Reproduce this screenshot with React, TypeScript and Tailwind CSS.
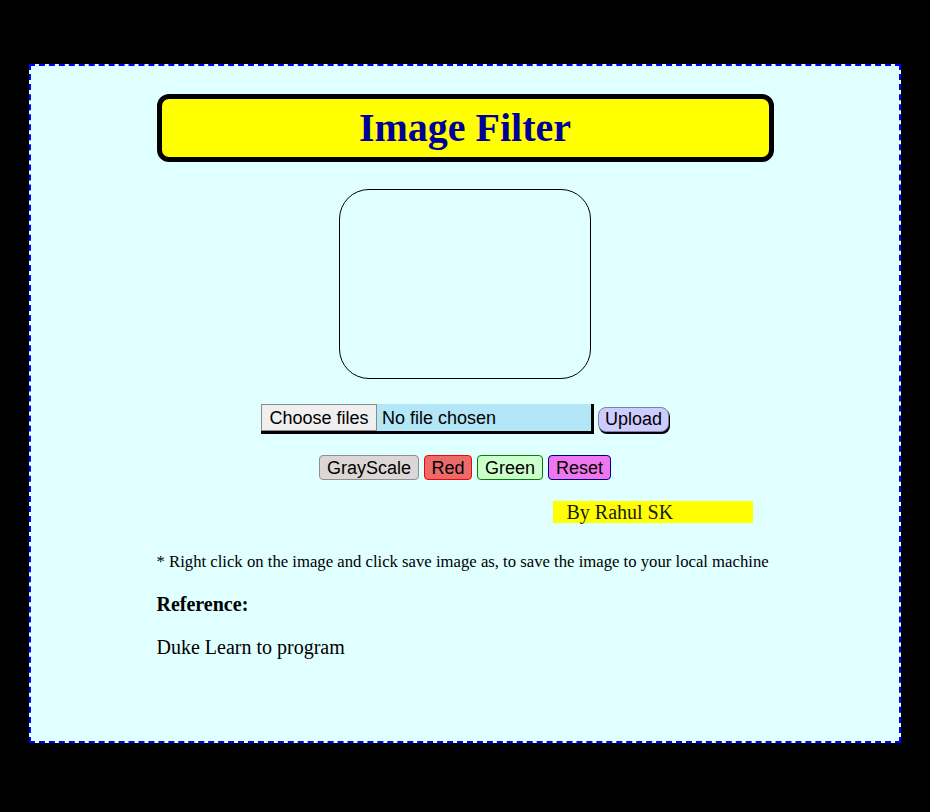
const filters = [
  { label: 'GrayScale', cls: 'w-[100px] bg-[#dcd6d6] border-[#8f8f8f]' },
  { label: 'Red', cls: 'w-[48px] bg-[#eb6b6b] border-[#ff0000]' },
  { label: 'Green', cls: 'w-[66px] bg-[#ccffcc] border-[#008000]' },
  { label: 'Reset', cls: 'w-[63px] bg-[#ee77ee] border-[#000080]' },
];

export default function App() {
  return (
    <div className="min-h-screen bg-black px-[29px] pt-[64px] pb-[69px]">
      <div className="h-[679px] border-2 border-dashed border-[#0000ff] bg-[#e0ffff]">
        <div className="mx-auto w-[617px] pt-[28px] font-['Liberation_Serif',serif] text-black">
          {/* Title */}
          <div className="flex h-[68px] items-center justify-center rounded-[12px] border-[5px] border-black bg-[#ffff00]">
            <h1 className="text-[40px] font-bold leading-none text-[#000099]">Image Filter</h1>
          </div>

          {/* Canvas */}
          <div className="mx-auto mt-[27px] h-[190px] w-[252px] rounded-[30px] border border-black" />

          {/* File input + upload */}
          <div className="mt-[25px] flex items-start justify-center font-['Liberation_Sans',Arial,sans-serif] text-[18px]">
            <div className="flex h-[30px] w-[333px] items-start border-r-[3px] border-b-[3px] border-black bg-[#b3e6f7]">
              <span className="flex h-[27px] w-[116px] items-center justify-center border border-[#8a8a8a] bg-[#efefef] leading-none">
                Choose files
              </span>
              <span className="ml-[5px] flex h-[27px] items-center leading-none">No file chosen</span>
            </div>
            <button className="mt-[3px] ml-[4px] flex h-[25px] w-[71px] items-center justify-center rounded-[8px] border border-[#8080a0] bg-[#ccccff] pb-[2px] leading-none shadow-[1px_2px_0_#000]">
              Upload
            </button>
          </div>

          {/* Filter buttons */}
          <div className="mt-[21px] flex justify-center gap-[5px] font-['Liberation_Sans',Arial,sans-serif] text-[18px]">
            {filters.map((f) => (
              <button
                key={f.label}
                className={`flex h-[25px] items-center justify-center rounded-[4px] border leading-none ${f.cls}`}
              >
                {f.label}
              </button>
            ))}
          </div>

          {/* Author */}
          <div className="mt-[21px] ml-[396px] h-[22px] w-[200px] bg-[#ffff00] pl-[14px] text-[20px] leading-[22px] text-[#1a1a1a]">
            By Rahul SK
          </div>

          <p className="mt-[29px] text-[16.7px] leading-[19px]">
            * Right click on the image and click save image as, to save the image to your local machine
          </p>
          <p className="mt-[22px] text-[20px] leading-[23px] font-bold">Reference:</p>
          <p className="mt-[20px] text-[20px] leading-[22px]">Duke Learn to program</p>
        </div>
      </div>
    </div>
  );
}
